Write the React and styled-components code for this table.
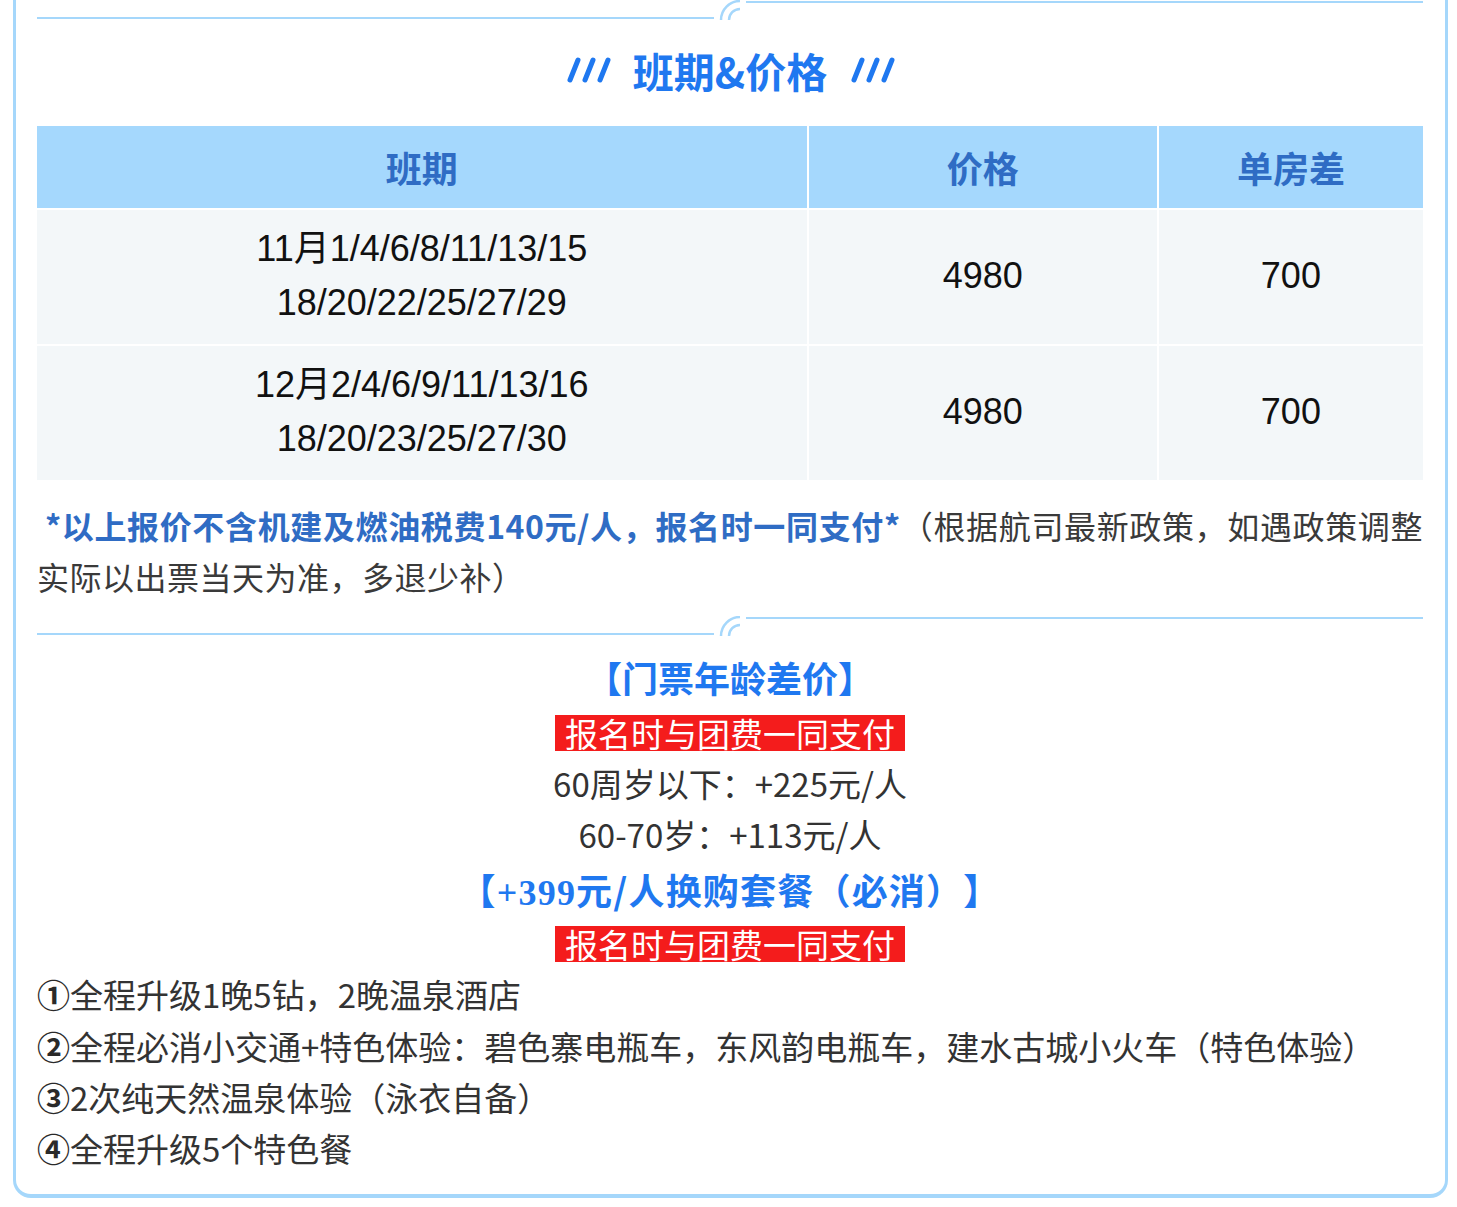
import React from 'react';
import styled, { createGlobalStyle } from 'styled-components';

const GlobalStyle = createGlobalStyle`
  body {
    margin: 0;
    background: #ffffff;
    text-spacing-trim: space-all;
  }
`;

const Card = styled.div`
  margin-left: 13px;
  width: 1435px;
  box-sizing: border-box;
  border: 3px solid #a5d7fb;
  border-top: none;
  border-bottom-width: 4px;
  border-radius: 0 0 18px 18px;
  padding: 0 22px 20px 21px;
  font-family: "Noto Sans CJK SC", sans-serif;
  color: #333333;
`;

const DividerRow = styled.div`
  display: flex;
  height: 20px;
`;

const DividerLine = styled.div`
  flex: 1;
  align-self: ${props => (props.top ? 'flex-start' : 'flex-end')};
  height: 2px;
  margin-top: ${props => (props.top ? '1px' : '0')};
  margin-bottom: ${props => (props.top ? '0' : '1px')};
  background: #a5d7fb;
`;

const TitleRow = styled.div`
  display: flex;
  justify-content: center;
  align-items: center;
  gap: 22px;
  height: 64px;
  margin: 18px 0 24px;
`;

const Title = styled.h2`
  margin: 0;
  font-size: 41px;
  font-weight: 700;
  color: #1f78f0;
  line-height: 64px;
`;

const PriceGrid = styled.div`
  display: grid;
  grid-template-columns: 769fr 348fr 264fr;
  gap: 2px;
`;

const HeadCell = styled.div`
  height: 82px;
  display: flex;
  align-items: center;
  justify-content: center;
  background: #a5d8fd;
  color: #2f6cc4;
  font-size: 36px;
  font-weight: 700;
`;

const BodyCell = styled.div`
  height: 134px;
  box-sizing: border-box;
  padding-bottom: 2px;
  display: flex;
  flex-direction: column;
  align-items: center;
  justify-content: center;
  background: #f3f7f9;
  color: #111111;
  font-family: "Liberation Sans", "Noto Sans CJK SC", sans-serif;
  font-size: 36px;
  line-height: 54px;
`;

const Notice = styled.p`
  margin: 20px 0 14px;
  font-size: 32px;
  line-height: 51.2px;
  letter-spacing: 0.5px;
  text-align: justify;
  color: #3a3a3a;
`;

const NoticeStrong = styled.strong`
  color: #2f6cc4;
  font-weight: 700;
`;

const Heading = styled.div`
  margin-top: ${props => props.gap || 0}px;
  height: 57.6px;
  text-align: center;
  font-size: 36px;
  font-weight: 700;
  line-height: 57.6px;
  letter-spacing: ${props => props.spread || 0}px;
  color: #1f78f0;
  white-space: nowrap;
`;

const Serif = styled.span`
  font-family: "Liberation Serif", serif;
  font-weight: 700;
`;

const BadgeRow = styled.div`
  height: 51.2px;
  display: flex;
  align-items: center;
  justify-content: center;
`;

const Badge = styled.span`
  background: #f41c1c;
  color: #ffffff;
  font-size: 33px;
  line-height: 36px;
  padding: 0 10px;
`;

const Line = styled.div`
  height: 51.2px;
  font-size: 33px;
  line-height: 51.2px;
  text-align: ${props => props.align || 'center'};
  color: #333333;
  white-space: nowrap;
`;

const Circled = styled.span`
  font-weight: 700;
  color: #2a2a2a;
`;

function Arc() {
  return (
    <svg width="32" height="20" viewBox="0 0 32 20">
      <path d="M7 20 A19 19 0 0 1 26 1" fill="none" stroke="#a5d7fb" strokeWidth="2.5" />
      <path d="M15 20 A11 11 0 0 1 26 9" fill="none" stroke="#a5d7fb" strokeWidth="2.5" />
    </svg>
  );
}

function Divider() {
  return (
    <DividerRow>
      <DividerLine />
      <Arc />
      <DividerLine top />
    </DividerRow>
  );
}

function Slashes() {
  return (
    <svg width="46" height="28" viewBox="0 0 46 28">
      {[0, 15, 30].map(x => (
        <line
          key={x}
          x1={x + 5}
          y1="24"
          x2={x + 13}
          y2="4"
          stroke="#1f78f0"
          strokeWidth="5"
          strokeLinecap="round"
        />
      ))}
    </svg>
  );
}

const rows = [
  { dates: ['11月1/4/6/8/11/13/15', '18/20/22/25/27/29'], price: '4980', single: '700' },
  { dates: ['12月2/4/6/9/11/13/16', '18/20/23/25/27/30'], price: '4980', single: '700' },
];

const extras = [
  ['①', '全程升级1晚5钻，2晚温泉酒店'],
  ['②', '全程必消小交通+特色体验：碧色寨电瓶车，东风韵电瓶车，建水古城小火车（特色体验）'],
  ['③', '2次纯天然温泉体验（泳衣自备）'],
  ['④', '全程升级5个特色餐'],
];

export default function App() {
  return (
    <>
      <GlobalStyle />
      <Card>
        <Divider />
        <TitleRow>
          <Slashes />
          <Title>班期&amp;价格</Title>
          <Slashes />
        </TitleRow>

        <PriceGrid>
          <HeadCell>班期</HeadCell>
          <HeadCell>价格</HeadCell>
          <HeadCell>单房差</HeadCell>
          {rows.map(row => (
            <React.Fragment key={row.dates[0]}>
              <BodyCell>
                {row.dates.map(d => (
                  <div key={d}>{d}</div>
                ))}
              </BodyCell>
              <BodyCell>{row.price}</BodyCell>
              <BodyCell>{row.single}</BodyCell>
            </React.Fragment>
          ))}
        </PriceGrid>

        <Notice>
          <NoticeStrong>&nbsp;*以上报价不含机建及燃油税费140元/人，报名时一同支付*</NoticeStrong>
          （根据航司最新政策，如遇政策调整实际以出票当天为准，多退少补）
        </Notice>

        <Divider />

        <Heading gap={13}>【门票年龄差价】</Heading>
        <BadgeRow>
          <Badge>报名时与团费一同支付</Badge>
        </BadgeRow>
        <Line>60周岁以下：+225元/人</Line>
        <Line>60-70岁：+113元/人</Line>
        <Heading spread={1.2}>
          【<Serif>+399</Serif>元/人换购套餐（必消）】
        </Heading>
        <BadgeRow>
          <Badge>报名时与团费一同支付</Badge>
        </BadgeRow>
        {extras.map(([num, text]) => (
          <Line key={num} align="left">
            <Circled>{num}</Circled>
            {text}
          </Line>
        ))}
      </Card>
    </>
  );
}
